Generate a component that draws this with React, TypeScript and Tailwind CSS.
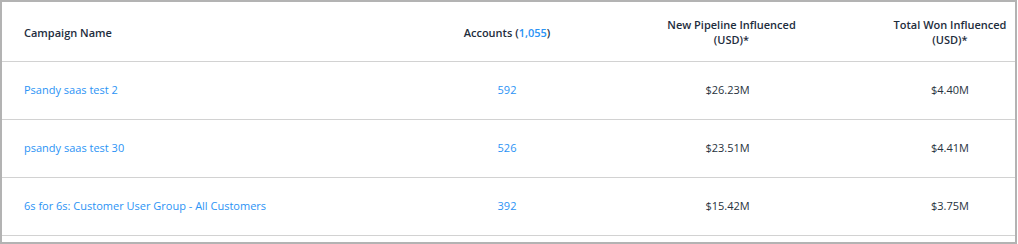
const rows = [
  { name: "Psandy saas test 2", accounts: "592", pipeline: "$26.23M", won: "$4.40M" },
  { name: "psandy saas test 30", accounts: "526", pipeline: "$23.51M", won: "$4.41M" },
  { name: "6s for 6s: Customer User Group - All Customers", accounts: "392", pipeline: "$15.42M", won: "$3.75M" },
];

const cols = "grid grid-cols-[410px_190px_283px_1fr]";

export default function App() {
  return (
    <div className="w-[1017px] h-[244px] bg-white font-['Open_Sans',sans-serif] text-[11px]">
      <div className="h-[244px] border-2 border-[#b3b3b3] bg-white pb-[6px]">
        <div className={`${cols} h-[60px] items-center border-b border-[#d2d2d2] font-semibold text-[#1e2d3d] leading-[15px]`}>
          <div className="pl-[22px] pt-[2px]">Campaign Name</div>
          <div className="text-center pt-[2px]">
            Accounts (<span className="text-[#2b93f5]">1,055</span>)
          </div>
          <div className="text-center pl-[48px] pr-[72px]">New Pipeline Influenced (USD)*</div>
          <div className="text-center pl-[6px] pr-[6px]">Total Won Influenced (USD)*</div>
        </div>
        {rows.map((r) => (
          <div key={r.name} className={`${cols} h-[58px] items-center border-b border-[#d2d2d2]`}>
            <div className="pl-[22px] text-[#2b93f5]">{r.name}</div>
            <div className="text-center text-[#2b93f5]">{r.accounts}</div>
            <div className="text-center pr-[32px] text-[#27323d]">{r.pipeline}</div>
            <div className="text-center text-[#27323d]">{r.won}</div>
          </div>
        ))}
      </div>
    </div>
  );
}
